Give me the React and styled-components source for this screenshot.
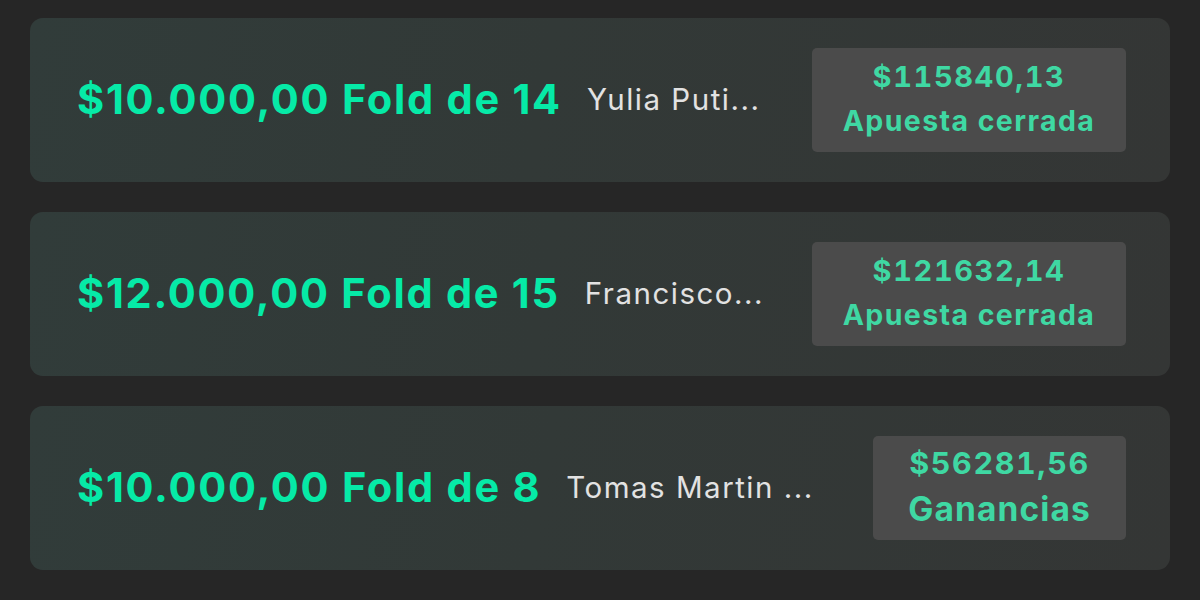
import React from "react";
import styled, { createGlobalStyle } from "styled-components";

const Global = createGlobalStyle`
  html, body { margin: 0; padding: 0; background: #262626; }
  body { font-family: Inter, "Noto Sans", sans-serif; -webkit-font-smoothing: antialiased; }
`;

const List = styled.div`
  width: 1200px;
  height: 600px;
  box-sizing: border-box;
  padding: 18px 30px 0 30px;
  display: flex;
  flex-direction: column;
  gap: 30px;
  background: #262626;
`;

const Card = styled.div`
  height: 164px;
  box-sizing: border-box;
  border-radius: 13px;
  background: linear-gradient(100deg, #313c3a 0%, #323937 45%, #343635 100%);
  display: flex;
  align-items: center;
  padding: 0 44px 0 47px;
`;

const Title = styled.span`
  font-family: Inter, Roboto, sans-serif;
  font-weight: 700;
  font-size: 41.5px;
  letter-spacing: 1.75px;
  color: #06eaa7;
  white-space: nowrap;
  margin-top: -3px;
`;

const Name = styled.span`
  font-family: Inter, Roboto, sans-serif;
  font-weight: 400;
  font-size: 29.5px;
  letter-spacing: 1.5px;
  color: #e2e2e2;
  margin-left: 25px;
  white-space: nowrap;
  margin-top: -2px;
`;

const Result = styled.div`
  margin-left: auto;
  width: ${(p) => p.$w}px;
  height: 104px;
  box-sizing: border-box;
  border-radius: 5px;
  background: #4b4b4b;
  display: flex;
  flex-direction: column;
  align-items: center;
  justify-content: center;
  color: #3fd8a3;
  font-family: Inter, Roboto, sans-serif;
  font-weight: 700;
`;

const Amount = styled.div`
  font-size: ${(p) => (p.$big ? 30.5 : 29)}px;
  line-height: 44px;
  letter-spacing: 1.6px;
  font-variant-numeric: tabular-nums;
  margin-top: -3px;
`;

const Status = styled.div`
  font-size: ${(p) => (p.$big ? 33.5 : 28.5)}px;
  line-height: ${(p) => (p.$big ? 48 : 44)}px;
  letter-spacing: ${(p) => (p.$big ? 1.1 : 1.4)}px;
`;

const rows = [
  { title: "$10.000,00 Fold de 14", name: "Yulia Puti...", amount: "$115840,13", status: "Apuesta cerrada", w: 314 },
  { title: "$12.000,00 Fold de 15", name: "Francisco...", amount: "$121632,14", status: "Apuesta cerrada", w: 314 },
  { title: "$10.000,00 Fold de 8", name: "Tomas Martin ...", amount: "$56281,56", status: "Ganancias", w: 253, big: true },
];

export default function App() {
  return (
    <>
      <Global />
      <List>
        {rows.map((r, i) => (
          <Card key={i}>
            <Title>{r.title}</Title>
            <Name>{r.name}</Name>
            <Result $w={r.w}>
              <Amount $big={r.big}>{r.amount}</Amount>
              <Status $big={r.big}>{r.status}</Status>
            </Result>
          </Card>
        ))}
      </List>
    </>
  );
}
